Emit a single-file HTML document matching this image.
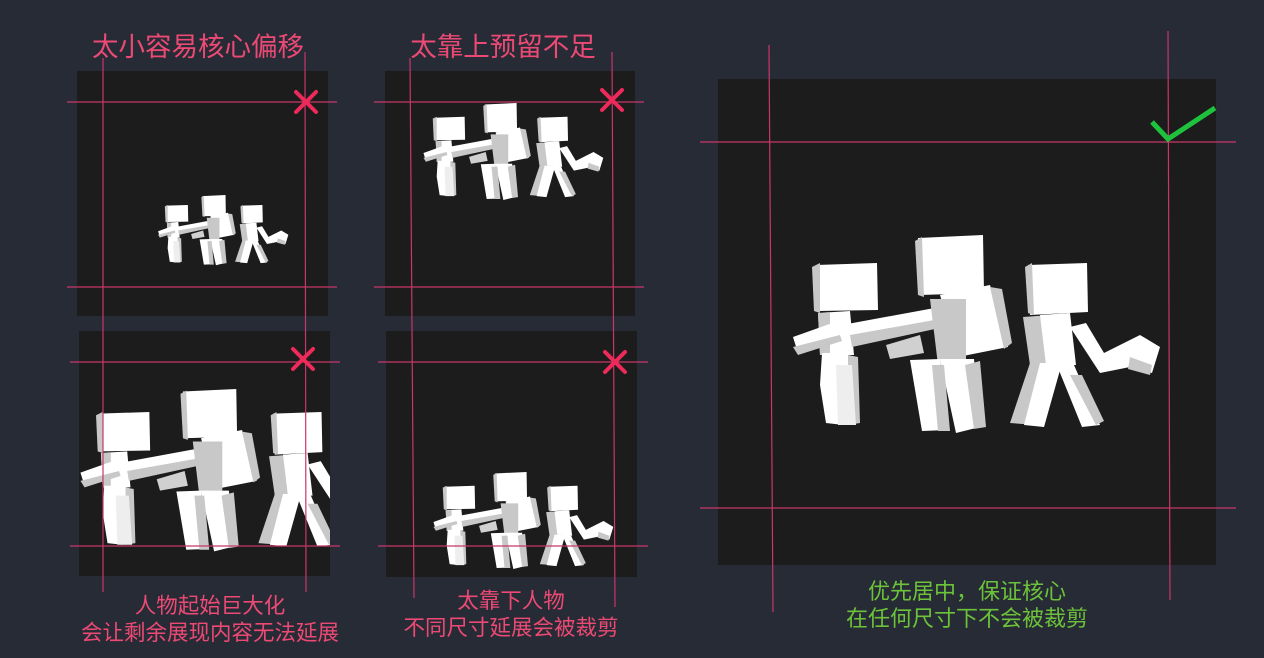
<!DOCTYPE html>
<html><head><meta charset="utf-8"><style>
html,body{margin:0;padding:0;background:#272b35;width:1264px;height:658px;overflow:hidden}
svg{display:block}
text{font-family:"Liberation Sans","Noto Sans CJK SC",sans-serif}
</style></head><body>
<svg width="1264" height="658" viewBox="0 0 1264 658" xmlns="http://www.w3.org/2000/svg">
<defs>
<g id="grp">
 <polygon points="26,30 87,28 88,75 28,76" fill="#fff"/>
 <polygon points="22,32 30,28 30,78 24,76" fill="#c8c8c8"/>
 <polygon points="28,78 60,76 64,120 30,120" fill="#fff"/>
 <polygon points="28,78 40,78 40,120 30,120" fill="#c8c8c8"/>
 <polygon points="3,102 48,86 52,104 8,118" fill="#fff"/>
 <polygon points="3,112 50,100 52,106 8,120" fill="#c8c8c8"/>
 <polygon points="32,118 58,118 62,150 54,190 36,188 30,150" fill="#fff"/>
 <polygon points="58,120 68,122 70,188 58,190" fill="#c8c8c8"/>
 <polygon points="46,130 62,130 66,190 48,190" fill="#eee"/>
 <polygon points="52,90 150,72 154,90 60,112" fill="#fff"/>
 <polygon points="60,100 150,84 154,92 62,112" fill="#c8c8c8"/>
 <polygon points="96,110 130,100 134,118 100,124" fill="#d0d0d0"/>
 <polygon points="128,3 193,0 194,58 130,60" fill="#fff"/>
 <polygon points="125,6 132,2 134,62 128,60" fill="#c8c8c8"/>
 <polygon points="150,60 200,50 218,112 168,122" fill="#fff"/>
 <polygon points="200,52 212,54 222,108 214,114" fill="#c8c8c8"/>
 <polygon points="140,64 176,64 176,128 148,130" fill="#c8c8c8"/>
 <polygon points="120,125 150,124 158,195 132,196" fill="#fff"/>
 <polygon points="150,124 184,124 190,192 166,198" fill="#fff"/>
 <polygon points="142,130 154,130 160,196 148,196" fill="#c8c8c8"/>
 <polygon points="175,130 190,126 196,192 184,194" fill="#c8c8c8"/>
 <polygon points="238,30 297,28 298,77 240,80" fill="#fff"/>
 <polygon points="235,32 242,28 244,80 238,78" fill="#c8c8c8"/>
 <polygon points="233,82 260,80 272,128 240,130" fill="#c8c8c8"/>
 <polygon points="250,80 280,78 286,130 256,130" fill="#fff"/>
 <polygon points="280,92 296,88 314,118 350,100 370,112 362,138 340,132 310,138" fill="#fff"/>
 <polygon points="340,122 362,130 360,140 338,134" fill="#c8c8c8"/>
 <polygon points="240,128 270,128 246,190 220,188" fill="#c8c8c8"/>
 <polygon points="250,128 272,128 254,192 234,190" fill="#fff"/>
 <polygon points="266,128 284,130 310,190 292,192" fill="#fff"/>
 <polygon points="280,140 292,140 314,186 306,190" fill="#c8c8c8"/>
</g>
</defs>

<rect x="77" y="71" width="251" height="245" fill="#1c1c1d"/>
<rect x="385" y="71" width="250" height="245" fill="#1c1c1d"/>
<rect x="79" y="331" width="251" height="245" fill="#1c1c1d"/>
<rect x="386" y="331" width="251" height="246" fill="#1c1c1d"/>
<rect x="718" y="79" width="498" height="486" fill="#1c1c1d"/>

<g transform="translate(157,195) scale(0.355)"><use href="#grp"/></g>
<g transform="translate(422,103) scale(0.49)"><use href="#grp"/></g>
<svg x="79" y="331" width="251" height="245"><g transform="translate(-1,58) scale(0.82)"><use href="#grp"/></g></svg>
<g transform="translate(432,472) scale(0.49)"><use href="#grp"/></g>
<g transform="translate(790,235)"><use href="#grp"/></g>

<g stroke="#c8366a" stroke-width="1.2" fill="none">
 <line x1="103" y1="58" x2="103" y2="592"/>
 <line x1="305" y1="52" x2="306" y2="592"/>
 <line x1="67" y1="102" x2="337" y2="102"/>
 <line x1="67" y1="287" x2="337" y2="287"/>
 <line x1="70" y1="362" x2="340" y2="362"/>
 <line x1="70" y1="546" x2="340" y2="546"/>
 <line x1="410" y1="58" x2="414" y2="598"/>
 <line x1="612" y1="52" x2="615" y2="607"/>
 <line x1="374" y1="102" x2="644" y2="102"/>
 <line x1="374" y1="287" x2="644" y2="287"/>
 <line x1="378" y1="362" x2="648" y2="362"/>
 <line x1="378" y1="546" x2="648" y2="546"/>
 <line x1="769" y1="45" x2="773" y2="612"/>
 <line x1="1168" y1="31" x2="1170" y2="600"/>
 <line x1="700" y1="142" x2="1236" y2="142"/>
 <line x1="700" y1="508" x2="1236" y2="508"/>
</g>

<g stroke="#ee2a5a" stroke-width="4" stroke-linecap="round">
 <line x1="296" y1="92" x2="316" y2="112"/><line x1="316" y1="92" x2="296" y2="112"/>
 <line x1="602" y1="90" x2="622" y2="110"/><line x1="622" y1="90" x2="602" y2="110"/>
 <line x1="293" y1="349" x2="313" y2="369"/><line x1="313" y1="349" x2="293" y2="369"/>
 <line x1="605" y1="352" x2="625" y2="372"/><line x1="625" y1="352" x2="605" y2="372"/>
</g>
<polyline points="1152,122 1168,139 1215,108" stroke="#1fc23c" stroke-width="5" fill="none"/>

<g fill="#ec4a75" text-anchor="middle">
 <text x="198" y="56" font-size="26.5">太小容易核心偏移</text>
 <text x="503" y="56" font-size="26.5">太靠上预留不足</text>
 <text x="210" y="613" font-size="21.5">人物起始巨大化</text>
 <text x="210" y="640" font-size="21.5">会让剩余展现内容无法延展</text>
 <text x="511" y="608" font-size="21.5">太靠下人物</text>
 <text x="511" y="635" font-size="21.5">不同尺寸延展会被裁剪</text>
</g>
<g fill="#6cc33a" text-anchor="middle">
 <text x="967" y="599" font-size="22">优先居中，保证核心</text>
 <text x="967" y="626" font-size="22">在任何尺寸下不会被裁剪</text>
</g>
</svg>
</body></html>
